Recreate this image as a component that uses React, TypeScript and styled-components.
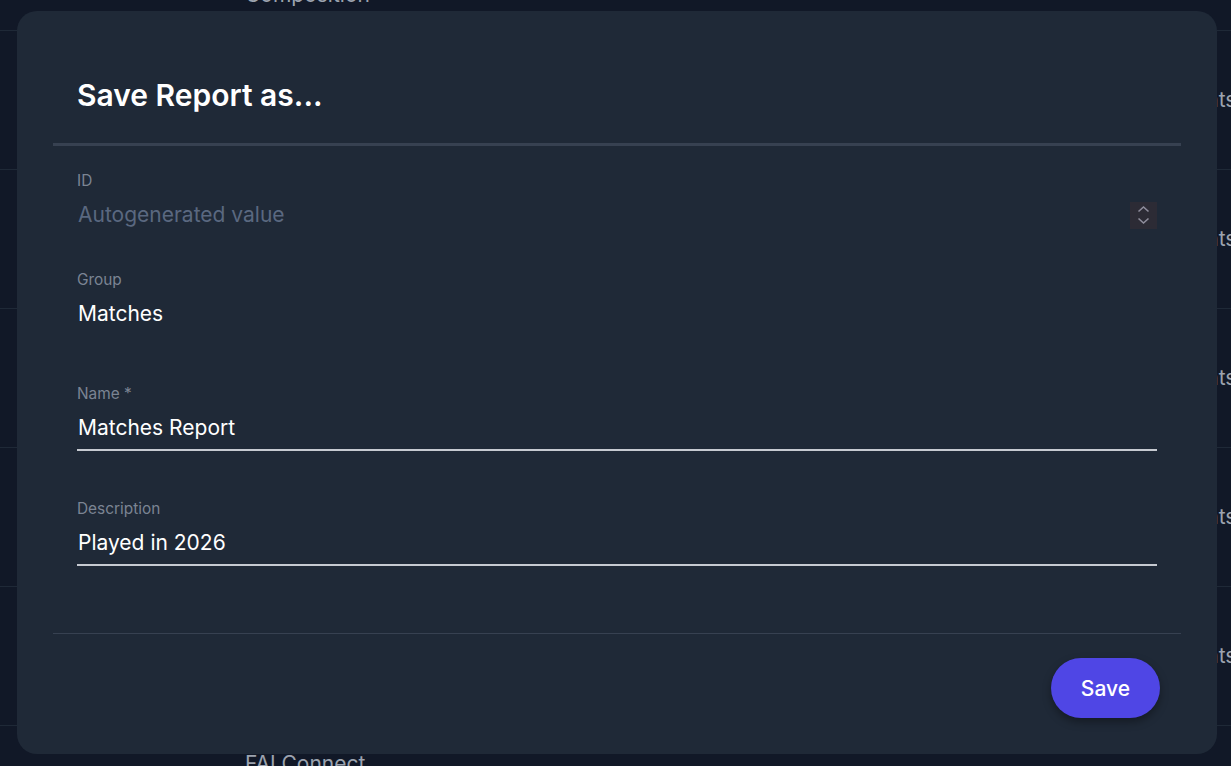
import React from "react";
import styled, { createGlobalStyle } from "styled-components";

const GlobalStyle = createGlobalStyle`
  html, body {
    margin: 0;
    padding: 0;
    background: #111827;
    overflow: hidden;
  }
  body {
    font-family: "Inter", "Noto Sans", sans-serif;
    -webkit-font-smoothing: antialiased;
  }
`;

const Page = styled.div`
  width: 1231px;
  height: 766px;
  overflow: hidden;
  background: #111827;
`;

const Table = styled.div`
  display: flex;
  flex-direction: column;
  margin-top: -108px;
`;

const Row = styled.div`
  display: grid;
  grid-template-columns: 245px 925px 1fr;
  height: 139px;
  border-bottom: 1px solid #1f2937;
  box-sizing: border-box;
`;

const Cell = styled.div<{ $align?: "start" | "center" | "end"; $pad?: number }>`
  display: flex;
  align-items: ${({ $align }) =>
    $align === "start" ? "flex-start" : $align === "end" ? "flex-end" : "center"};
  padding: ${({ $align, $pad = 0 }) =>
    $align === "start" ? `${$pad}px 0 0` : $align === "end" ? `0 0 ${$pad}px` : "0"};
  color: #9ca3af;
  font-size: 21px;
  line-height: 24px;
  white-space: nowrap;
`;

const Overlay = styled.div`
  position: fixed;
  inset: 0;
  display: flex;
  align-items: flex-start;
  padding: 11px 0 0 17px;
`;

const Modal = styled.div`
  width: 1200px;
  height: 743px;
  box-sizing: border-box;
  background: #1f2937;
  border-radius: 20px;
  padding: 36px;
  display: flex;
  flex-direction: column;
`;

const Header = styled.div`
  padding: 30px 24px;
  border-bottom: 3px solid #374151;
`;

const Title = styled.h2`
  margin: 0;
  font-size: 30px;
  line-height: 36px;
  font-weight: 600;
  color: #ffffff;
`;

const Body = styled.div`
  flex: 1;
  padding: 25px 24px 0;
  display: flex;
  flex-direction: column;
`;

const Field = styled.div<{ $space: number }>`
  display: flex;
  flex-direction: column;
  margin-bottom: ${({ $space }) => $space}px;
`;

const Label = styled.label`
  font-size: 15.4px;
  line-height: 20px;
  color: #7b8493;
`;

const InputRow = styled.div<{ $underline?: boolean; $bottom: number }>`
  display: flex;
  align-items: center;
  justify-content: space-between;
  padding: 10px 0 ${({ $bottom }) => $bottom}px;
  border-bottom: 2px solid
    ${({ $underline }) => ($underline ? "#c6cad1" : "transparent")};
`;

const Value = styled.span<{ $placeholder?: boolean }>`
  padding-left: 1px;
  font-size: 21px;
  line-height: 28px;
  color: ${({ $placeholder }) => ($placeholder ? "#5a6880" : "#ffffff")};
`;

const Spinner = styled.span`
  display: flex;
  width: 27px;
  height: 27px;
  background: #2c2b35;
`;

const Footer = styled.div`
  display: flex;
  justify-content: flex-end;
  border-top: 1px solid #374151;
  padding: 24px 21px 0;
`;

const SaveButton = styled.button`
  height: 60px;
  padding: 0 30px;
  border: none;
  border-radius: 30px;
  background: #4f46e5;
  color: #ffffff;
  font-family: "Inter", sans-serif;
  font-size: 21px;
  font-weight: 500;
  box-shadow: 0 4px 8px rgba(0, 0, 0, 0.35);
  cursor: pointer;
`;

const SpinnerIcon = () => (
  <svg width="27" height="27" viewBox="0 0 27 27" fill="none">
    <path d="M8.5 9.5 L13.5 5 L18.5 9.5" stroke="#8e8d9c" strokeWidth="1.6" />
    <path d="M8.5 16.5 L13.5 21 L18.5 16.5" stroke="#8e8d9c" strokeWidth="1.6" />
  </svg>
);

const rows: {
  mid?: string;
  midAlign?: "start" | "center" | "end";
  pad?: number;
  right?: string;
}[] = [
  { mid: "Composition", midAlign: "end", pad: 23 },
  { right: "Events" },
  { right: "Events" },
  { right: "Events" },
  { right: "Events" },
  { right: "Events" },
  { mid: "FAI Connect", midAlign: "start", pad: 26 },
];

export default function App() {
  return (
    <>
      <GlobalStyle />
      <Page>
        <Table>
          {rows.map((r, i) => (
            <Row key={i}>
              <Cell />
              <Cell $align={r.midAlign} $pad={r.pad}>
                {r.mid}
              </Cell>
              <Cell>{r.right}</Cell>
            </Row>
          ))}
        </Table>
      </Page>
      <Overlay>
        <Modal>
          <Header>
            <Title>Save Report as...</Title>
          </Header>
          <Body>
            <Field $space={39}>
              <Label>ID</Label>
              <InputRow $bottom={0}>
                <Value $placeholder>Autogenerated value</Value>
                <Spinner>
                  <SpinnerIcon />
                </Spinner>
              </InputRow>
            </Field>
            <Field $space={45}>
              <Label>Group</Label>
              <InputRow $bottom={9}>
                <Value>Matches</Value>
              </InputRow>
            </Field>
            <Field $space={48}>
              <Label>Name *</Label>
              <InputRow $underline $bottom={7}>
                <Value>Matches Report</Value>
              </InputRow>
            </Field>
            <Field $space={0}>
              <Label>Description</Label>
              <InputRow $underline $bottom={7}>
                <Value>Played in 2026</Value>
              </InputRow>
            </Field>
          </Body>
          <Footer>
            <SaveButton>Save</SaveButton>
          </Footer>
        </Modal>
      </Overlay>
    </>
  );
}
